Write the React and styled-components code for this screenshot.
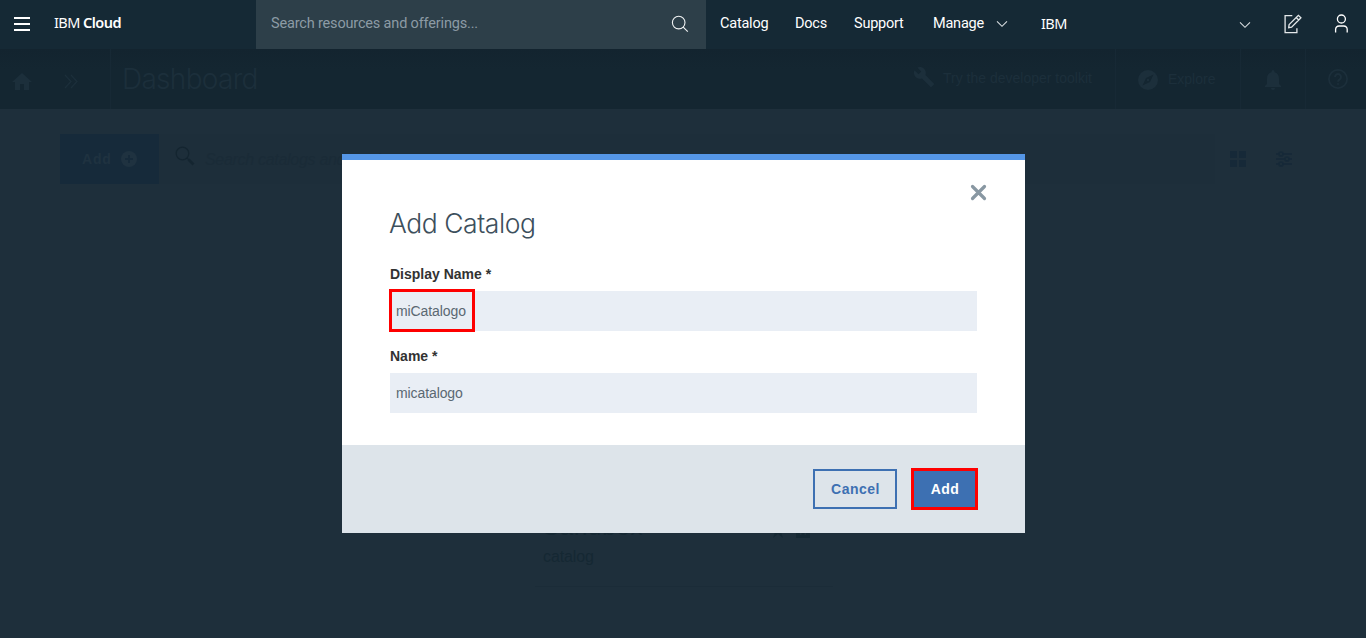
import React from 'react';
import styled, { createGlobalStyle } from 'styled-components';

const Global = createGlobalStyle`
  * { box-sizing: border-box; }
  html, body { margin: 0; height: 100%; overflow: hidden; background: #1e2f3b; }
  body { font-family: "Liberation Sans", Arial, sans-serif; }
  svg { display: block; flex: none; }
  button, input { font: inherit; border: 0; border-radius: 0; margin: 0; }
`;

const Page = styled.div`
  height: 638px;
  display: flex;
  flex-direction: column;
  background: #1e2f3b;
`;

const TopBar = styled.header`
  height: 49px;
  flex: none;
  display: flex;
  background: #152935;
  color: #fff;
  font-family: Roboto, "Noto Sans", sans-serif;
  font-size: 14.5px;
  line-height: 22px;
`;

const Brand = styled.div`
  width: 256px;
  display: flex;
  align-items: flex-start;
  padding: 12px 0 0 14px;
  gap: 24px;
`;

const BrandName = styled.span`
  flex: ${p => (p.$grow ? 1 : 'none')};
  font-family: "Noto Sans", sans-serif;
  font-size: 14.5px;
  line-height: 20px;
  letter-spacing: -0.55px;
  white-space: pre;
  b { font-weight: 600; }
`;

const MenuIcon = styled.div`
  width: 16px;
  height: 14px;
  margin: 5px 0 0;
  border: solid #fff;
  border-width: 2px 0;
  display: flex;
  align-items: center;
  &::after { content: ""; height: 2px; flex: 1; background: #fff; }
`;

const ResourceSearch = styled.div`
  width: 450px;
  display: flex;
  justify-content: space-between;
  padding: 13px 17px 0 15px;
  background: #2d3f49;
  color: #8c9ba5;
  letter-spacing: -0.17px;
  svg { margin-top: 2px; }
`;

const TopNav = styled.nav`
  display: flex;
  flex: 1;
  padding: 13px 17px 0 14px;
`;

const NavItem = styled.a`
  width: ${p => p.$width}px;
  letter-spacing: -0.22px;
`;

const NavIcon = styled.span`
  width: ${p => p.$width}px;
  padding-top: ${p => p.$top || 0}px;
`;

const SubBar = styled.div`
  height: 60px;
  flex: none;
  display: flex;
  background: linear-gradient(#13242f, #142631 20px);
  color: #1c2f3b;
`;

const SubCell = styled.div`
  width: ${p => p.$width}px;
  padding: ${p => p.$pad};
  display: flex;
  align-items: flex-start;
  gap: ${p => p.$gap || 0}px;
  border-right: ${p => (p.$rule ? '1px solid #172935' : '0')};
  font-size: 14px;
  line-height: 20px;
  white-space: nowrap;
`;

const SubLabel = styled.span`
  margin-top: ${p => p.$shift}px;
`;

const PageTitle = styled.h1`
  margin: 0;
  flex: 1;
  padding: 12px 0 0 11px;
  font: 300 28px/36px Inter, sans-serif;
  letter-spacing: -0.7px;
`;

const Toolbar = styled.div`
  display: flex;
  height: 50px;
  flex: none;
  margin: 25px 60px 0;
  color: #162938;
`;

const ToolbarAdd = styled.button`
  width: 99px;
  display: flex;
  align-items: center;
  padding: 0 0 0 22px;
  gap: 9px;
  background: #162a3a;
  color: #1f3240;
  font-weight: 700;
  font-size: 14px;
  letter-spacing: 0.8px;
`;

const CatalogSearch = styled.div`
  width: 1056px;
  display: flex;
  gap: 10px;
  padding: 12px 0 0 16px;
  background: #1d2e3a;
  color: #1a2b37;
  font-style: italic;
  font-size: 16px;
  line-height: 28px;
  letter-spacing: -0.3px;
`;

const ViewTools = styled.div`
  display: flex;
  gap: 30px;
  padding: 17px 0 0 15px;
`;

const CatalogCard = styled.article`
  width: 298px;
  height: 110px;
  margin: 293px auto 0;
  transform: translateX(1px);
  padding: 34px 23px 0 8px;
  border-bottom: 1px solid #1b2c38;
  color: #152833;
`;

const CardHead = styled.div`
  display: flex;
  align-items: flex-end;
  gap: 11px;
  height: 27px;
  strong {
    flex: 1;
    font-weight: 400;
    font-size: 24px;
    line-height: 22px;
    letter-spacing: 0.8px;
  }
`;

const CardText = styled.p`
  margin: 9px 0 0;
  font-size: 16px;
  line-height: 20px;
  letter-spacing: -0.1px;
`;

const Overlay = styled.div`
  position: fixed;
  inset: 49px 0 0;
  display: flex;
  align-items: center;
  justify-content: center;
  padding-left: 1px;
`;

const Dialog = styled.section`
  width: 683px;
  height: 379px;
  display: flex;
  flex-direction: column;
  border-top: 6px solid #5596e6;
  background: #fff;
`;

const DialogBody = styled.div`
  flex: 1;
  position: relative;
  padding: 45px 48px 0;
`;

const CloseButton = styled.button`
  position: absolute;
  top: 24px;
  right: 38px;
  padding: 0;
  background: none;
`;

const DialogTitle = styled.h2`
  margin: 0 0 24px;
  font: 300 26.5px/36px Inter, sans-serif;
  letter-spacing: -0.45px;
  text-indent: -1px;
  color: #3d4f5c;
`;

const Field = styled.label`
  display: block;
  height: 82px;
  color: #323232;
  font-weight: 700;
  font-size: 14px;
  line-height: 18px;
`;

const FieldInput = styled.div`
  height: 40px;
  margin-top: 8px;
  display: flex;
  align-items: center;
  padding-left: 6px;
  background: #e9eef5;
  color: #5a6872;
  font-weight: 400;
  font-size: 14px;
  letter-spacing: -0.1px;
  position: relative;
`;

const Marker = styled.span`
  position: absolute;
  left: -1px;
  top: -2px;
  width: 86px;
  height: 43px;
  border: 3px solid #fe0000;
`;

const DialogFooter = styled.footer`
  height: 88px;
  display: flex;
  justify-content: flex-end;
  align-items: center;
  gap: 14px;
  padding: 0 47px 0 0;
  background: #dde4ea;
`;

const ActionButton = styled.button`
  width: ${p => p.$width}px;
  height: ${p => (p.$primary ? 42 : 40)}px;
  padding: 0 0 1px 1px;
  border: ${p => (p.$primary ? '3px solid #fe0000' : '2px solid #3d70b2')};
  background: ${p => (p.$primary ? '#3d70b2' : 'transparent')};
  color: ${p => (p.$primary ? '#fff' : '#3d70b2')};
  font-weight: 700;
  font-size: 14px;
  letter-spacing: 0.5px;
`;

const Chevron = () => (
  <svg width="12" height="8" viewBox="0 0 12 8" fill="none" stroke="#d8dde0" strokeWidth="1.1"><path d="M1 1.3 6 6.3 11 1.3" /></svg>
);

export default function App() {
  return (
    <Page>
      <Global />
      <TopBar>
        <Brand>
          <MenuIcon />
          <BrandName>IBM <b>Cloud</b></BrandName>
        </Brand>
        <ResourceSearch>
          <span>Search resources and offerings...</span>
          <svg width="18" height="18" viewBox="0 0 18 18" fill="none" stroke="#f1f3f4" strokeWidth="1.1"><circle cx="7.7" cy="7.6" r="6.3" /><path d="m12.2 12.1 4.6 4.6" /></svg>
        </ResourceSearch>
        <TopNav>
          <NavItem $width={75}>Catalog</NavItem>
          <NavItem $width={59}>Docs</NavItem>
          <NavItem $width={79}>Support</NavItem>
          <NavItem $width={63}>Manage</NavItem>
          <NavIcon $width={45} $top={7}><Chevron /></NavIcon>
          <BrandName $grow>IBM</BrandName>
          <NavIcon $width={45} $top={8}><Chevron /></NavIcon>
          <NavIcon $width={50} $top={1}>
            <svg width="18" height="20" viewBox="0 0 18 20" fill="none" stroke="#e4e8ea" strokeWidth="1.3"><path d="M8.3 1.7H1.1v17h11.8v-4.5M5.1 10.6 13.5 2.2l.9-.9 2.5 2.5-.9.9-8.4 8.4-2.9.5zM12.2 3.5l2.5 2.5" /></svg>
          </NavIcon>
          <svg width="15" height="20" viewBox="0 0 15 20" fill="none" stroke="#fff" strokeWidth="1.3"><circle cx="7.4" cy="6" r="4" /><path d="M1.6 19.500v-3c0-2.200 1.300-3.500 3.500-3.500h4.600c2.200 0 3.500 1.300 3.500 3.500v3" /></svg>
        </TopNav>
      </TopBar>
      <SubBar>
        <SubCell $width={111} $pad="24px 0 0 12px" $gap={32} $rule>
          <svg width="20" height="17" viewBox="0 0 20 17" fill="currentColor"><path d="M10 0 20 9h-3v8h-5v-6H8v6H3V9H0z" /></svg>
          <svg width="15" height="17" viewBox="0 0 15 17" fill="none" stroke="currentColor" strokeWidth="1.200"><path d="m1 2 6 6.500L1 15M7 2l6 6.500L7 15" /></svg>
        </SubCell>
        <PageTitle>Dashboard</PageTitle>
        <SubCell $width={204} $pad="17px 0 0 1px" $gap={8} $rule>
          <svg width="22" height="22" viewBox="0 0 24 24" fill="currentColor"><path d="m22.7 19-9.1-9.1c.9-2.3.4-5-1.5-6.900-2-2-5-2.400-7.400-1.300L9 6 6 9 1.600 4.700C.4 7.100.9 10.100 2.900 12.100c1.900 1.900 4.600 2.400 6.900 1.500l9.100 9.100c.4.4 1 .4 1.400 0l2.300-2.300c.5-.4.5-1.100.1-1.400z" /></svg>
          <SubLabel $shift={2}>Try the developer toolkit</SubLabel>
        </SubCell>
        <SubCell $width={125} $pad="21px 0 0 22px" $gap={10} $rule>
          <svg width="20" height="20" viewBox="0 0 20 20"><circle cx="10" cy="10" r="10" fill="currentColor" /><path d="m15.500 4.500-3.500 7.500-7.500 3.500L8 8z" fill="#142631" /><circle cx="10" cy="10" r="1.200" fill="#1c2f3b" /></svg>
          <SubLabel $shift={-1}>Explore</SubLabel>
        </SubCell>
        <SubCell $width={65} $pad="21px 0 0 24px" $rule>
          <svg width="16" height="20" viewBox="0 0 16 20" fill="currentColor"><path d="M8 20a2 2 0 0 0 2-2H6a2 2 0 0 0 2 2m6-6V8.500C14 5.400 12.400 2.900 9.500 2.200v-.7a1.500 1.500 0 0 0-3 0v.7C3.600 2.900 2 5.400 2 8.500V14l-2 2v1h16v-1z" /></svg>
        </SubCell>
        <SubCell $width={60} $pad="20px 0 0 22px">
          <svg width="20" height="20" viewBox="0 0 20 20" fill="none" stroke="currentColor" strokeWidth="1.700"><circle cx="10" cy="10" r="9.100" /><path d="M7 8a3 3 0 1 1 4.500 2.600c-1 .6-1.500 1.100-1.500 2.200M10 14.200v1.600" strokeWidth="1.900" /></svg>
        </SubCell>
      </SubBar>
      <Toolbar>
        <ToolbarAdd>
          Add
          <svg width="16" height="16" viewBox="0 0 16 16"><circle cx="8" cy="8" r="8" fill="currentColor" /><path d="M8 4v8M4 8h8" stroke="#162a3a" strokeWidth="2" /></svg>
        </ToolbarAdd>
        <CatalogSearch>
          <svg width="20" height="20" viewBox="0 0 20 20" fill="none" stroke="#142530"><circle cx="7.500" cy="7.500" r="6.300" strokeWidth="1.300" /><path d="m12 12 2 2" strokeWidth="1.500" /><path d="m13.500 13.500 5 5" strokeWidth="2.800" /></svg>
          <span>Search catalogs and products</span>
        </CatalogSearch>
        <ViewTools>
          <svg width="16" height="16" viewBox="0 0 16 16" fill="currentColor"><path d="M0 0h7v7H0zM9 0h7v7H9zM0 9h7v7H0zM9 9h7v7H9z" /></svg>
          <svg width="16" height="16" viewBox="0 0 16 16" fill="#1e2f3b" stroke="currentColor" strokeWidth="1.700"><path d="M0 3h16M0 8h16M0 13h16" /><circle cx="5" cy="3" r="2" /><circle cx="11" cy="8" r="2" /><circle cx="5" cy="13" r="2" /></svg>
        </ViewTools>
      </Toolbar>
      <CatalogCard>
        <CardHead>
          <strong>Sandbox</strong>
          <svg width="14" height="14" viewBox="0 0 14 14" fill="currentColor"><path d="m7 0 2 5h5l-4 3 2 6-5-4-5 4 2-6-4-3h5z" /></svg>
          <svg width="14" height="16" viewBox="0 0 14 16" fill="currentColor"><path fillRule="evenodd" d="M0 3h14v13H0zM4 0h6v2H4zM4 6h1.500v7H4zM8.500 6H10v7H8.500z" /></svg>
        </CardHead>
        <CardText>catalog</CardText>
      </CatalogCard>
      <Overlay>
        <Dialog>
          <DialogBody>
            <CloseButton aria-label="Close">
              <svg width="17" height="17" viewBox="0 0 17 17" stroke="#8897a2" strokeWidth="3.200" strokeLinecap="round"><path d="m2.500 2.500 12 12M14.500 2.500l-12 12" /></svg>
            </CloseButton>
            <DialogTitle>Add Catalog</DialogTitle>
            <Field>
              Display Name *
              <FieldInput>miCatalogo<Marker /></FieldInput>
            </Field>
            <Field>
              Name *
              <FieldInput>micatalogo</FieldInput>
            </Field>
          </DialogBody>
          <DialogFooter>
            <ActionButton $width={84}>Cancel</ActionButton>
            <ActionButton $width={67} $primary>Add</ActionButton>
          </DialogFooter>
        </Dialog>
      </Overlay>
    </Page>
  );
}
